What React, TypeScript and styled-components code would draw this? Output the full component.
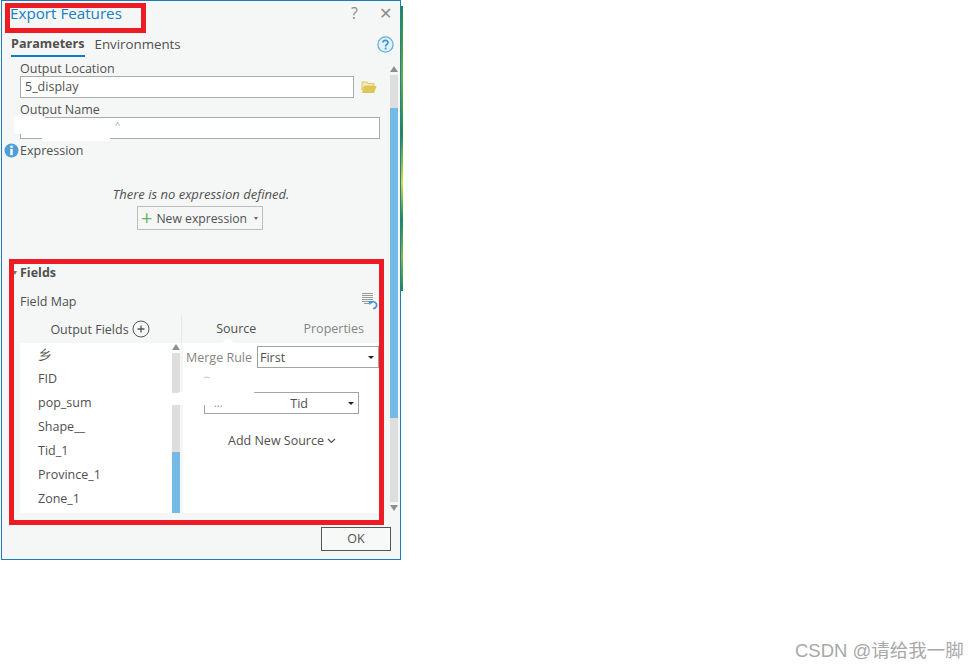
import React from 'react';
import styled, { createGlobalStyle } from 'styled-components';

const Global = createGlobalStyle`
	html, body{
		margin: 0;
		background: #fff;
		font-family: "Open Sans", "Noto Sans", "Liberation Sans", sans-serif;
	}
`

const Page = styled.div`
	position: relative;
	width: 980px;
	height: 670px;
	overflow: hidden;
	background: #fff;
`

const Dialog = styled.div`
	margin-left: 1px;
	width: 400px;
	height: 560px;
	box-sizing: border-box;
	border: 1px solid #1a7cb8;
	background: #f5f7f6;
	display: flex;
	flex-direction: column;
	color: #505050;
	font-size: 12.5px;
`

const TitleBar = styled.div`
	height: 32px;
	display: flex;
	align-items: center;
	margin-right: -1px;
	padding: 0 0 8px 8px;
	box-sizing: border-box;
`

const Title = styled.div`
	flex: 1;
	font-size: 15.2px;
	color: #1580c4;
`

const TitleIcon = styled.span`
	width: 31px;
	text-align: center;
	color: #8c8c8c;
	font-size: 16px;
`

const Tabs = styled.div`
	height: 24px;
	display: flex;
	align-items: flex-start;
	padding: 2px 6px 0 9px;
	box-sizing: border-box;
	gap: 10px;
`

const Tab = styled.div<{ $active?: boolean }>`
	height: 22px;
	line-height: 18px;
	box-sizing: border-box;
	font-size: ${p => (p.$active ? '12.6px' : '13.3px')};
	font-weight: ${p => (p.$active ? 700 : 400)};
	border-bottom: ${p => (p.$active ? '2px solid #0f7ac0' : 'none')};
`

const TabSpacer = styled.div`
	flex: 1;
`

const HelpSlot = styled.div`
	margin-top: 1px;
	height: 17px;
`

const Main = styled.div`
	flex: 1;
	display: flex;
	padding: 5px 2px 0 18px;
	gap: 10px;
	min-height: 0;
`

const Content = styled.div`
	width: 360px;
	display: flex;
	flex-direction: column;
`

const Label = styled.div`
	height: 13px;
	line-height: 11px;
	margin-top: 1px;
`

const InputRow = styled.div<{ $withIcon?: boolean }>`
	display: flex;
	align-items: center;
	gap: 7px;
	margin-bottom: 5px;
	padding-right: ${p => (p.$withIcon ? '3px' : '0')};
`

const Input = styled.div`
	flex: 1;
	height: 22px;
	line-height: 20px;
	box-sizing: border-box;
	border: 1px solid #ababab;
	background: #fff;
	padding-left: 4px;
`

const ExpressionRow = styled.div`
	display: flex;
	align-items: center;
	gap: 1px;
	height: 16px;
	margin: -2px 0 0 -16px;
`

const NoExpression = styled.div`
	margin-top: 27px;
	text-align: center;
	font-style: italic;
	font-size: 13px;
	height: 18px;
	line-height: 18px;
	padding-left: 2px;
`

const NewButton = styled.div`
	align-self: center;
	margin-top: 3px;
	width: 126px;
	height: 24px;
	box-sizing: border-box;
	border: 1px solid #bdbdbd;
	display: flex;
	align-items: center;
	padding-left: 3px;
	gap: 4px;
	font-size: 12.2px;
`

const GreenPlus = styled.span`
	color: #63b463;
	font-size: 20px;
	line-height: 20px;
`

const Caret = styled.span`
	width: 0;
	height: 0;
	margin-left: 3px;
	border-left: 2.5px solid transparent;
	border-right: 2.5px solid transparent;
	border-top: 3px solid #666;
`

const SectionTitle = styled.div`
	margin-top: 34px;
	height: 18px;
	line-height: 18px;
	font-weight: 700;
	position: relative;

	&::before{
		content: '';
		position: absolute;
		left: -7px;
		top: 7px;
		border-left: 2.5px solid transparent;
		border-right: 2.5px solid transparent;
		border-top: 4px solid #777;
	}
`

const FieldMapRow = styled.div`
	display: flex;
	justify-content: space-between;
	align-items: center;
	height: 20px;
	margin-top: 9px;
	padding-right: 2px;
`

const MapHeader = styled.div`
	display: flex;
	height: 28px;
	margin-top: 4px;
`

const OutputHeader = styled.div`
	width: 162px;
	display: flex;
	justify-content: center;
	align-items: center;
	gap: 3px;
	box-sizing: border-box;
	border-right: 1px solid #e6e8e7;
	padding-right: 1px;
`

const SideTab = styled.div<{ $muted?: boolean }>`
	flex: 1;
	position: relative;
	text-align: center;
	line-height: 28px;
	color: ${p => (p.$muted ? '#858585' : '#505050')};
	padding-left: ${p => (p.$muted ? '5px' : '8px')};

	${p => !p.$muted && `
		&::after{
			content: '';
			position: absolute;
			left: 40px;
			bottom: 0;
			border-left: 6px solid transparent;
			border-right: 6px solid transparent;
			border-bottom: 5px solid #fff;
		}
	`}
`

const MapBody = styled.div`
	display: flex;
	height: 170px;
	gap: 3px;
`

const FieldList = styled.div`
	width: 160px;
	background: #fff;
	display: flex;
`

const FieldItems = styled.div`
	flex: 1;
	padding-left: 18px;
`

const FieldItem = styled.div`
	height: 24px;
	line-height: 24px;
`

const SourcePanel = styled.div`
	flex: 1;
	background: #fff;
	display: flex;
	flex-direction: column;
	padding: 3px 1px 0 3px;
`

const MergeRow = styled.div`
	display: flex;
	align-items: center;
	gap: 5px;
	color: #858585;
`

const Select = styled.div<{ $width: number; $indent?: number }>`
	width: ${p => p.$width}px;
	margin-left: ${p => p.$indent ?? 0}px;
	height: 22px;
	box-sizing: border-box;
	border: 1px solid #a3a3a3;
	background: #fff;
	color: #505050;
	display: flex;
	align-items: center;
	justify-content: space-between;
	padding: 0 4px 0 2px;
`

const SelectCaret = styled.span`
	width: 0;
	height: 0;
	border-left: 3px solid transparent;
	border-right: 3px solid transparent;
	border-top: 3px solid #222;
`

const SourceSelect = styled(Select)`
	margin-top: 24px;
	gap: 40px;
`

const SelectBits = styled.span`
	margin: 0 auto 0 7px;
	color: #888;
	font-size: 11px;
	line-height: 20px;
`

const AddSource = styled.div`
	margin-top: 18px;
	display: flex;
	justify-content: center;
	align-items: center;
	gap: 3px;
	padding-right: 1px;
`

const ScrollTrack = styled.div<{ $width: number }>`
	width: ${p => p.$width}px;
	display: flex;
	flex-direction: column;
	align-items: stretch;
	flex-shrink: 0;
`

const ScrollPart = styled.div<{ $h: number; $color: string }>`
	height: ${p => p.$h}px;
	background: ${p => p.$color};
`

const ArrowUp = styled.div<{ $h: number; $top: number }>`
	height: ${p => p.$h}px;
	display: flex;
	justify-content: center;
	align-items: flex-start;
	&::after{
		content: '';
		margin-top: ${p => p.$top}px;
		border-left: 4px solid transparent;
		border-right: 4px solid transparent;
		border-bottom: 6px solid #8f8f8f;
	}
`

const ArrowDown = styled.div`
	height: 9px;
	display: flex;
	justify-content: center;
	align-items: flex-start;
	&::after{
		content: '';
		margin-top: 3px;
		border-left: 4px solid transparent;
		border-right: 4px solid transparent;
		border-top: 6px solid #8f8f8f;
	}
`

const Footer = styled.div`
	height: 39px;
	display: flex;
	justify-content: flex-end;
	padding: 7px 9px 0 0;
	box-sizing: border-box;
`

const OkButton = styled.div`
	width: 70px;
	height: 24px;
	line-height: 22px;
	box-sizing: border-box;
	text-align: center;
	border: 1px solid #555;
	background: #f7f8f8;
`

/* the marks and white-outs that sit on top of the screenshot */
const RedBox = styled.div<{ $x: number; $y: number; $w: number; $h: number }>`
	position: absolute;
	left: ${p => p.$x}px;
	top: ${p => p.$y}px;
	width: ${p => p.$w}px;
	height: ${p => p.$h}px;
	box-sizing: border-box;
	border: 5px solid #ed1c24;
	pointer-events: none;
`

const Patch = styled.div<{ $x: number; $y: number; $w: number; $h: number; $pad?: number }>`
	position: absolute;
	left: ${p => p.$x}px;
	top: ${p => p.$y}px;
	width: ${p => p.$w}px;
	height: ${p => p.$h}px;
	box-sizing: border-box;
	padding-left: ${p => p.$pad ?? 0}px;
	background: #fff;
	color: #999;
	font-size: 9px;
	line-height: 14px;
	border-radius: 2px;
`

const DesktopEdge = styled.div`
	position: absolute;
	left: 401px;
	top: 6px;
	width: 2px;
	height: 285px;
	background: linear-gradient(#1f8a3d, #6fae2a 25%, #1f8a3d 45%, #d9e021 62%, #1f8a3d 75%, #8ab82a 88%, #1f8a3d);
`

const Watermark = styled.div`
	position: absolute;
	left: 795px;
	top: 640px;
	font-family: "Liberation Sans", "Noto Sans CJK SC", sans-serif;
	font-size: 18.5px;
	line-height: 22px;
	color: #a8a8a8;
	white-space: nowrap;
`

const FolderIcon = () => (
	<svg width="16" height="13" viewBox="0 0 16 13">
		<path d="M1 9 L1 1 L6 1 L7 2.5 L13 2.5 L13 5 L3.5 5 Z" fill="#f3e9b5" stroke="#d6bf4c" strokeWidth="0.8" />
		<path d="M3.5 5 L15.7 5 L13 12 L0.7 12 Z" fill="#dcc757" />
	</svg>
)

const HelpIcon = () => (
	<svg width="17" height="17" viewBox="0 0 17 17">
		<circle cx="8.5" cy="8.5" r="7.6" fill="#e2f0fa" stroke="#62aee0" strokeWidth="1.3" />
		<path d="M6 6.6 C6 3.6 11 3.6 11 6.5 C11 8.5 8.6 8.4 8.6 10.6" fill="none" stroke="#3a93d3" strokeWidth="1.6" />
		<rect x="7.7" y="11.6" width="1.8" height="1.8" fill="#3a93d3" />
	</svg>
)

const InfoIcon = () => (
	<svg width="15" height="15" viewBox="0 0 15 15">
		<circle cx="7.5" cy="7.5" r="7" fill="#4f9fd6" />
		<rect x="6.3" y="2.6" width="2.4" height="2.2" fill="#fff" />
		<rect x="6.3" y="5.8" width="2.4" height="6.4" fill="#fff" />
	</svg>
)

const ResetListIcon = () => (
	<svg width="17" height="18" viewBox="0 0 17 18">
		<path d="M1 1.5 H12 M1 3.5 H12 M1 5.5 H12 M1 7.5 H12 M1 9.5 H11 M3 11.5 H8" stroke="#9a9a9a" strokeWidth="1" />
		<path d="M9.5 11 A3.4 3.4 0 1 1 12 16.5" fill="none" stroke="#4096d6" strokeWidth="1.7" />
		<path d="M7.5 9 L12 9.5 L8.5 13 Z" fill="#4096d6" />
	</svg>
)

const AddCircleIcon = () => (
	<svg width="18" height="18" viewBox="0 0 18 18">
		<circle cx="9" cy="9" r="8" fill="none" stroke="#555" strokeWidth="1" />
		<path d="M9 5.5 V12.5 M5.5 9 H12.5" stroke="#555" strokeWidth="1.3" />
	</svg>
)

const Chevron = () => (
	<svg width="9" height="6" viewBox="0 0 9 6">
		<path d="M1 1 L4.5 4.5 L8 1" fill="none" stroke="#505050" strokeWidth="1.2" />
	</svg>
)

const FIELDS = ['乡', 'FID', 'pop_sum', 'Shape__', 'Tid_1', 'Province_1', 'Zone_1'];

const App: React.FC = () => {
	return (
		<Page>
			<Global />
			<Dialog>
				<TitleBar>
					<Title>Export Features</Title>
					<TitleIcon>?</TitleIcon>
					<TitleIcon>✕</TitleIcon>
				</TitleBar>
				<Tabs>
					<Tab $active>Parameters</Tab>
					<Tab>Environments</Tab>
					<TabSpacer />
					<HelpSlot><HelpIcon /></HelpSlot>
				</Tabs>
				<Main>
					<Content>
						<Label>Output Location</Label>
						<InputRow $withIcon>
							<Input>5_display</Input>
							<FolderIcon />
						</InputRow>
						<Label>Output Name</Label>
						<InputRow>
							<Input />
						</InputRow>
						<ExpressionRow>
							<InfoIcon />
							Expression
						</ExpressionRow>
						<NoExpression>There is no expression defined.</NoExpression>
						<NewButton>
							<GreenPlus>+</GreenPlus>
							New expression
							<Caret />
						</NewButton>
						<SectionTitle>Fields</SectionTitle>
						<FieldMapRow>
							Field Map
							<ResetListIcon />
						</FieldMapRow>
						<MapHeader>
							<OutputHeader>
								Output Fields
								<AddCircleIcon />
							</OutputHeader>
							<SideTab>Source</SideTab>
							<SideTab $muted>Properties</SideTab>
						</MapHeader>
						<MapBody>
							<FieldList>
								<FieldItems>
									{FIELDS.map(f => <FieldItem key={f}>{f}</FieldItem>)}
								</FieldItems>
								<ScrollTrack $width={8}>
									<ArrowUp $h={10} $top={1} />
									<ScrollPart $h={40} $color="#dedede" />
									<ScrollPart $h={12} $color="#fff" />
									<ScrollPart $h={47} $color="#dedede" />
									<ScrollPart $h={61} $color="#75b9e6" />
								</ScrollTrack>
							</FieldList>
							<SourcePanel>
								<MergeRow>
									Merge Rule
									<Select $width={122}>
										First
										<SelectCaret />
									</Select>
								</MergeRow>
								<SourceSelect $width={155} $indent={18}>
									<SelectBits>…</SelectBits>
									Tid
									<SelectCaret />
								</SourceSelect>
								<AddSource>
									Add New Source
									<Chevron />
								</AddSource>
							</SourcePanel>
						</MapBody>
					</Content>
					<ScrollTrack $width={8}>
						<ArrowUp $h={13} $top={4} />
						<ScrollPart $h={33} $color="#dedede" />
						<ScrollPart $h={310} $color="#75b9e6" />
						<ScrollPart $h={84} $color="#dedede" />
						<ArrowDown />
					</ScrollTrack>
				</Main>
				<Footer>
					<OkButton>OK</OkButton>
				</Footer>
			</Dialog>
			<DesktopEdge />
			<Patch $x={14} $y={116} $w={31} $h={18} />
			<Patch $x={45} $y={118} $w={87} $h={18} $pad={70}>^</Patch>
			<Patch $x={42} $y={135} $w={68} $h={6} />
			<Patch $x={184} $y={374} $w={71} $h={18} $pad={18}>⌒</Patch>
			<Patch $x={178} $y={392} $w={77} $h={13} />
			<RedBox $x={5} $y={3} $w={141} $h={30} />
			<RedBox $x={9} $y={259} $w={375} $h={266} />
			<Watermark>CSDN @请给我一脚</Watermark>
		</Page>
	)
}

export default App;
